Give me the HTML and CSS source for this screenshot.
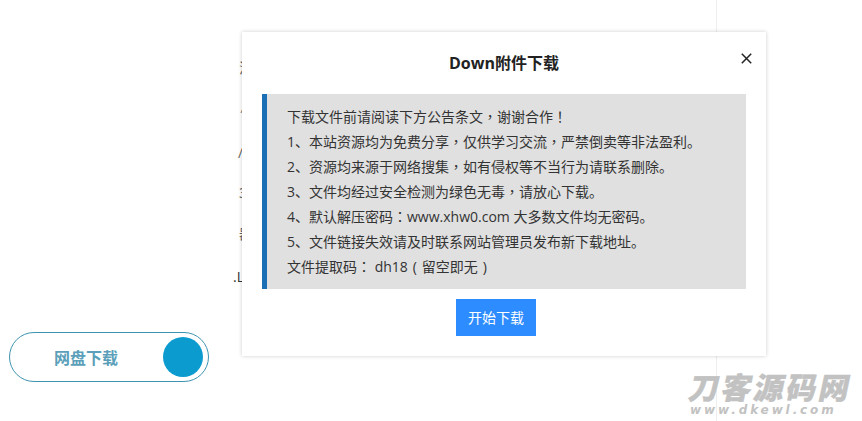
FILE: index.html
```html
<!DOCTYPE html>
<html lang="zh-CN">
<head>
<meta charset="utf-8">
<title>Down附件下载</title>
<link rel="stylesheet" href="styles.css">
</head>
<body>
<div class="page">
  <main class="content">
    <div class="fragments">
      <span class="frag f1">法</span>
      <span class="frag f2">′</span>
      <span class="frag f3">/</span>
      <span class="frag f4">3</span>
      <span class="frag f5">器</span>
      <span class="frag f6">.L</span>
    </div>
    <a class="pan-btn">
      <span class="pan-label">网盘下载</span>
      <span class="pan-dot"></span>
    </a>
  </main>
</div>
<section class="modal">
  <h2 class="modal-title">Down附件下载</h2>
  <button class="modal-close" aria-label="关闭">
    <svg width="11" height="11" viewBox="0 0 11 11"><path d="M.8.8l9.4 9.4M10.2.8L.8 10.2" stroke="#222" stroke-width="1.5" fill="none"/></svg>
  </button>
  <div class="notice">
    <p>下载文件前请阅读下方公告条文<span class="pc" lang="zh-TW">，</span>谢谢合作<span class="pc" lang="zh-TW">！</span></p>
    <p>1、本站资源均为免费分享<span class="pc" lang="zh-TW">，</span>仅供学习交流<span class="pc" lang="zh-TW">，</span>严禁倒卖等非法盈利。</p>
    <p>2、资源均来源于网络搜集<span class="pc" lang="zh-TW">，</span>如有侵权等不当行为请联系删除。</p>
    <p>3、文件均经过安全检测为绿色无毒<span class="pc" lang="zh-TW">，</span>请放心下载。</p>
    <p>4、默认解压密码<span class="pc" lang="zh-TW">：</span>www.xhw0.com 大多数文件均无密码。</p>
    <p>5、文件链接失效请及时联系网站管理员发布新下载地址。</p>
    <p>文件提取码<span class="pc" lang="zh-TW">：</span> dh18<span class="paren">(</span>留空即无<span class="paren">)</span></p>
  </div>
  <div class="modal-actions"><a class="start-btn">开始下载</a></div>
</section>
<div class="watermark">
  <div class="wm-cn">刀客源码网</div>
  <div class="wm-en">www.dkewl.com</div>
</div>
</body>
</html>
```
FILE: styles.css
```css
* { box-sizing: border-box; }
html, body { margin: 0; height: 100%; background: #fff; overflow: hidden; }
body { font-family: "Open Sans", "Noto Sans CJK SC", sans-serif; color: #333; }
.page { height: 421px; }
.content {
  width: 717px;
  height: 421px;
  border-right: 1px solid #eee;
  padding: 332px 0 0 9px;
  position: relative;
}
.fragments { position: absolute; inset: 0; }
.frag {
  position: absolute;
  left: 239px;
  font-size: 14px;
  line-height: 16px;
  color: #666;
  white-space: nowrap;
}
.f2 { top: 106px; left: 240px; }
.f1 { top: 60px; }
.f3 { top: 145px; left: 238px; }
.f4 { top: 185px; }
.f5 { top: 226px; }
.f6 { top: 269px; left: 233px; color: #333; }
.pan-btn {
  display: flex;
  align-items: center;
  justify-content: space-between;
  width: 200px;
  height: 50px;
  padding: 0 5px 0 44px;
  border: 1px solid #3d93b0;
  border-radius: 25px;
  background: #fff;
}
.pan-label { font-size: 16px; font-weight: 700; color: #5b9fba; }
.pan-dot { width: 40px; height: 40px; border-radius: 50%; background: #0b9bcf; }
.modal {
  position: absolute;
  left: 242px;
  top: 32px;
  width: 524px;
  height: 324px;
  padding: 0 20px;
  background: #fff;
  box-shadow: 0 0 4px rgba(0, 0, 0, .2);
}
.modal-title {
  margin: 0;
  height: 62px;
  padding-top: 20px;
  text-align: center;
  font-size: 16px;
  line-height: 22px;
  font-weight: 700;
  color: #222;
}
.modal-close {
  position: absolute;
  right: 14px;
  top: 21px;
  display: flex;
  padding: 0;
  border: 0;
  background: none;
}
.notice {
  height: 195px;
  padding: 10px 20px 0;
  border-left: 5px solid #1b6fb5;
  background: #e0e0e0;
}
.notice p { margin: 0; font-size: 14px; line-height: 25px; color: #333; white-space: nowrap; }
.pc { font-family: "Noto Sans CJK TC", sans-serif; }
.paren { display: inline-block; width: 14px; text-align: center; }
.modal-actions { display: flex; justify-content: center; padding: 10px 16px 0 0; }
.start-btn {
  width: 80px;
  height: 37px;
  background: #2d8cff;
  color: #fff;
  font-size: 14px;
  line-height: 37px;
  text-align: center;
}
.watermark {
  position: absolute;
  left: 690px;
  top: 370px;
  width: 164px;
  color: #c2c2c2;
  font-family: "Noto Sans CJK SC", sans-serif;
  font-weight: 900;
}
.wm-cn { font-size: 30px; line-height: 32px; letter-spacing: 2.5px; white-space: nowrap; transform: skewX(-12deg); -webkit-text-stroke: .4px #c2c2c2; }
.wm-en { margin-top: 2px; font-family: "DejaVu Sans", sans-serif; font-weight: 700; font-style: italic; font-size: 12px; line-height: 12px; letter-spacing: 2.9px; white-space: nowrap; }
```
